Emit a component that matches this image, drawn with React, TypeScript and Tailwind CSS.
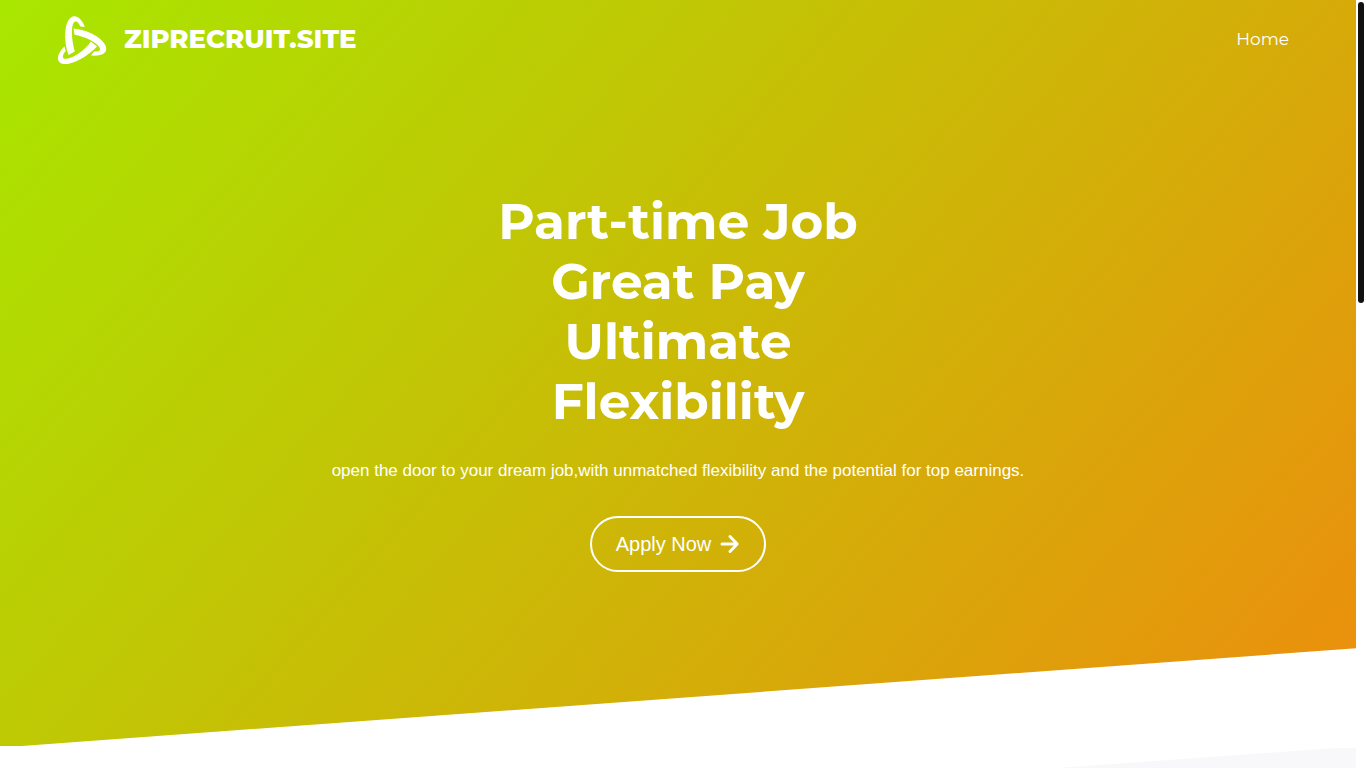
function Logo() {
  return (
    <svg viewBox="0 0 64 64" className="size-16" fill="currentColor" aria-hidden="true">
      <path d="M18.500 48C14.500 37 14 23 17.500 15C20.500 8.500 26 7.500 30 12C32.500 14.500 34 17.500 34.800 20L30.500 19.500C28.500 15.500 26.500 13.500 24.500 14.800C20.500 18.500 21.500 33 24.800 44.500Z" />
      <path d="M23.500 21.500C36 22.500 50 29 55 37.500C59 45 53.500 49.500 41 48.500L44 44.500C49 44.800 51 43.500 49.500 40.500C46.500 35 34.500 29.500 24.500 27.800Z" />
      <path d="M41 34.500L47 39.500C38.500 48.500 27 55.300 18 56.900C10 58 6.500 54 8.300 48.500C9.500 45 12 41.500 14.500 39.500L15.800 44C12.500 47.500 12 51 14.500 51.800C21 52.500 34 44.500 41 34.500Z" />
    </svg>
  );
}

function ArrowIcon() {
  return (
    <svg
      viewBox="0 0 20 20"
      className="size-5"
      fill="none"
      stroke="currentColor"
      strokeWidth="3"
      strokeLinejoin="round"
      aria-hidden="true"
    >
      <path d="M2 10H16" strokeLinecap="round" />
      <path d="M10 2.500L17.200 10L10 17.500" strokeLinecap="round" />
    </svg>
  );
}

function Header() {
  return (
    <header className="flex h-[78px] items-center justify-between pr-[67px] pl-[50px]">
      <a href="#home" className="flex items-center gap-[10px]">
        <Logo />
        <span className="font-[Montserrat,Inter,sans-serif] text-[26px] leading-9 font-extrabold">
          ZIPRECRUIT.SITE
        </span>
      </a>
      <nav>
        <a href="#home" className="font-[Montserrat,Inter,sans-serif] text-[17px] leading-6 font-normal">
          Home
        </a>
      </nav>
    </header>
  );
}

const headline = ["Part-time Job", "Great Pay", "Ultimate", "Flexibility"];

export default function App() {
  return (
    <div className="flex h-screen overflow-hidden bg-white font-['Liberation_Sans',Arial,sans-serif]">
      <div className="min-w-0 flex-1">
        <section className="bg-[linear-gradient(131deg,#a8e700,#ef8a0e_103%)] pb-[174px] text-white [clip-path:polygon(0_0,100%_0,100%_86.9%,1.6%_100%,0_100%)]">
          <Header />
          <main className="flex flex-col items-center pt-[114px] text-center">
            <h1 className="font-[Montserrat,Inter,sans-serif] text-[50px] leading-[60px] font-bold">
              {headline.map((line) => (
                <span key={line} className="block">
                  {line}
                </span>
              ))}
            </h1>
            <p className="mt-6 text-[17px] leading-[30px]">
              open the door to your dream job,with unmatched flexibility and the potential for top earnings.
            </p>
            <button
              type="button"
              className="mt-[30px] flex h-14 items-center gap-[9px] rounded-full border-2 border-white px-6 text-[20px] leading-6"
            >
              Apply Now
              <ArrowIcon />
            </button>
          </main>
        </section>
        <section className="mt-[2px] h-24 bg-[#f8f8fa] [clip-path:polygon(100%_0,98.500%_0,0_100%,100%_100%)]" />
      </div>
      <div className="w-[10px] shrink-0 bg-white p-[2px]" aria-hidden="true">
        <div className="h-[301px] rounded-full bg-[#111]" />
      </div>
    </div>
  );
}
